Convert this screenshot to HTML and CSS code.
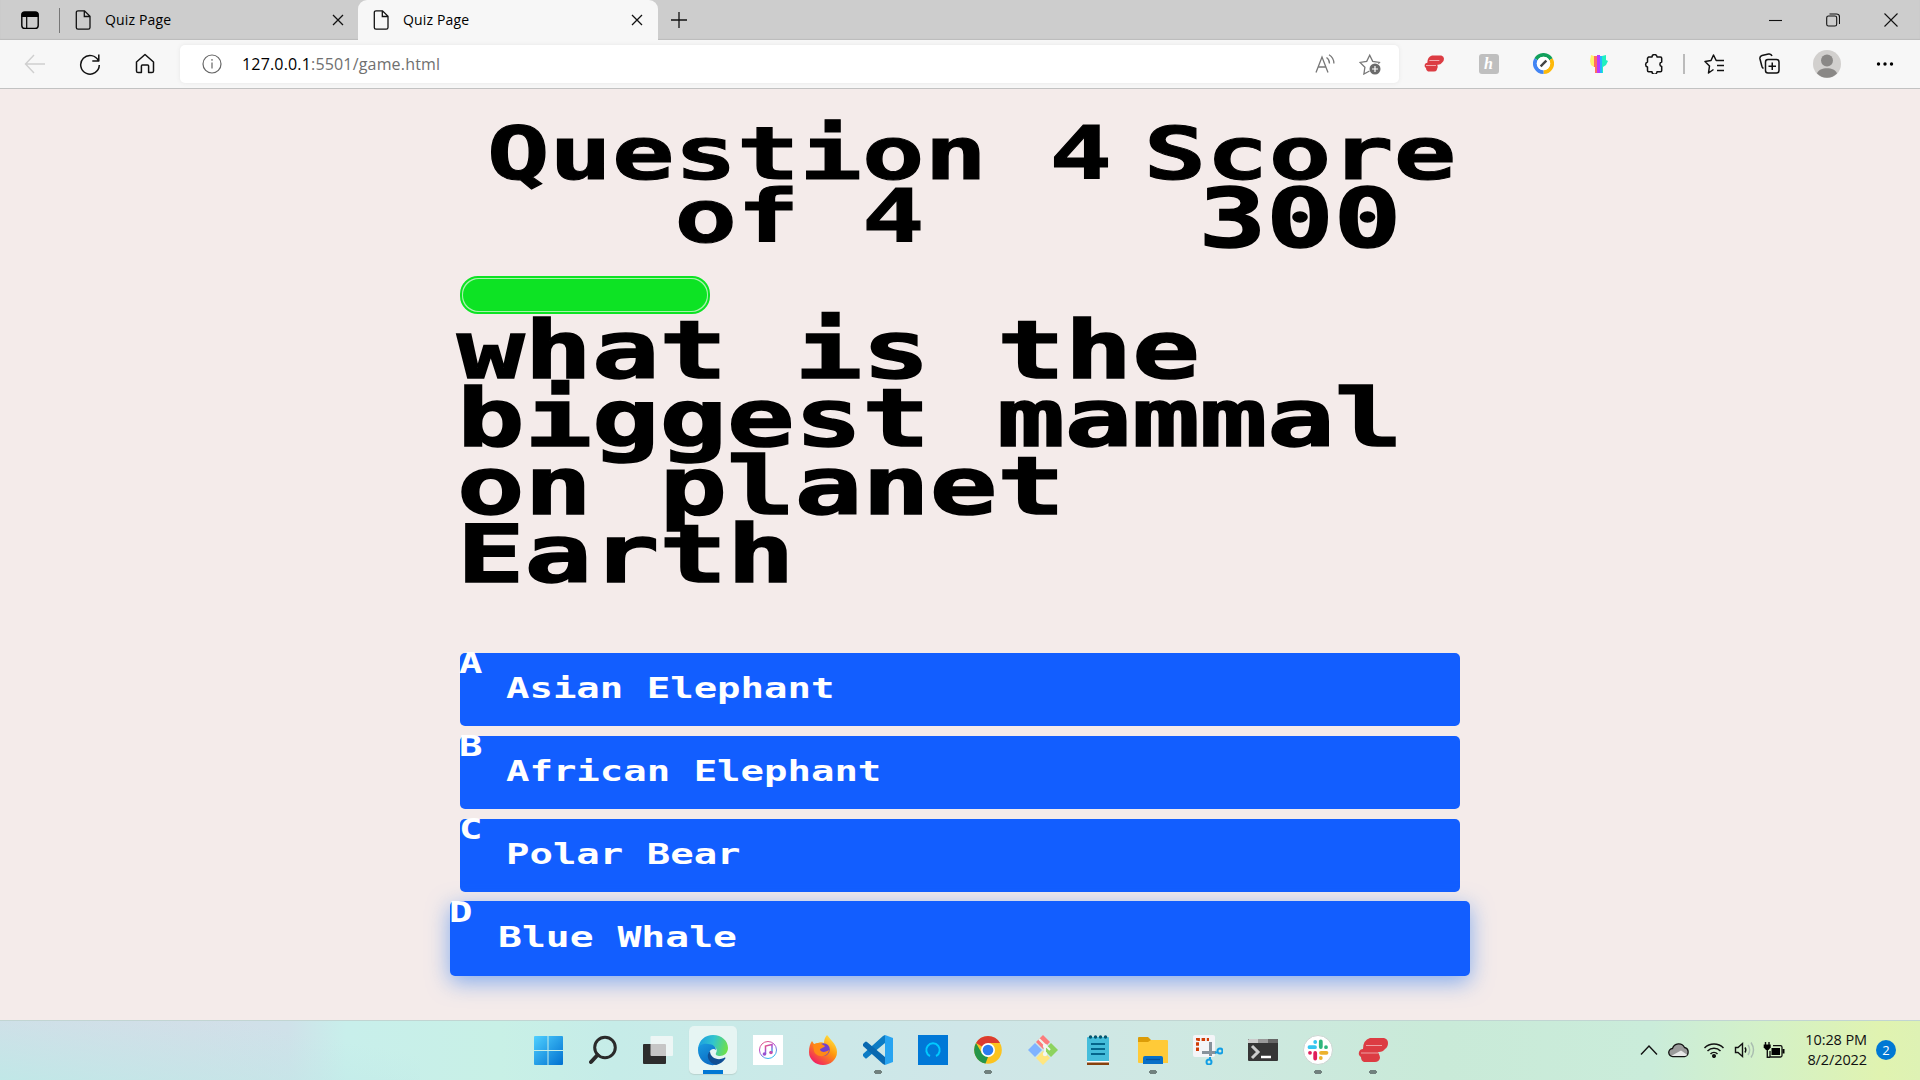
FILE: index.html
```html
<!DOCTYPE html>
<html lang="en">
<head>
<meta charset="utf-8">
<title>Quiz Page</title>
<link rel="stylesheet" href="styles.css">
</head>
<body>
<header class="tabstrip">
  <div class="tab-menu"><svg width="20" height="20" viewBox="0 0 20 20"><rect x="1.8" y="2" width="16.4" height="16.4" rx="3" fill="none" stroke="#000" stroke-width="1.4"/><path d="M1.5 7V5a3 3 0 0 1 3-3h11a3 3 0 0 1 3 3v2z"/><path d="M6.7 7v11" stroke="#000" stroke-width="1.2"/></svg></div>
  <div class="tab">
    <svg width="18" height="20" viewBox="0 0 18 20" class="line"><path d="M4 .8h6.5L16 6.300v11.200a1.700 1.700 0 0 1-1.700 1.700H4a1.700 1.700 0 0 1-1.700-1.700v-15A1.700 1.700 0 0 1 4 .8zM10.300 1v5.500H16"/></svg>
    <span class="tab-title">Quiz Page</span>
    <svg width="12" height="12" viewBox="0 0 12 12" class="line"><path d="M1 1l10 10M11 1L1 11"/></svg>
  </div>
  <div class="tab tab-active">
    <svg width="18" height="20" viewBox="0 0 18 20" class="line"><path d="M4 .8h6.500L16 6.300v11.200a1.700 1.700 0 0 1-1.700 1.700H4a1.700 1.700 0 0 1-1.700-1.700v-15A1.700 1.700 0 0 1 4 .8zM10.300 1v5.500H16"/></svg>
    <span class="tab-title">Quiz Page</span>
    <svg width="12" height="12" viewBox="0 0 12 12" class="line"><path d="M1 1l10 10M11 1L1 11"/></svg>
  </div>
  <div class="new-tab"><svg width="18" height="18" viewBox="0 0 18 18" class="line"><path d="M9 1v16M1 9h16"/></svg></div>
  <div class="window-buttons">
    <span><svg width="14" height="14" viewBox="0 0 14 14" class="hair"><path d="M1 7.500h13"/></svg></span>
    <span><svg width="14" height="14" viewBox="0 0 14 14" class="hair"><rect x=".7" y="3" width="10" height="10" rx="1.800"/><path d="M3.500 1h7a3 3 0 0 1 3 3v7"/></svg></span>
    <span><svg width="14" height="14" viewBox="0 0 14 14" class="hair"><path d="M.5.5l13 13M13.500.5l-13 13"/></svg></span>
  </div>
</header>

<nav class="toolbar">
  <div class="tool"><svg width="22" height="20" viewBox="0 0 22 20" fill="none" stroke="#cfcfcf" stroke-width="1.400"><path d="M21 10H2M10 1L1.500 10l8.500 9"/></svg></div>
  <div class="tool"><svg width="22" height="22" viewBox="0 0 22 22" class="line bold"><path d="M19.500 8A9.300 9.300 0 1 0 20.300 12M19.800 1.500V8h-6.500"/></svg></div>
  <div class="tool"><svg width="20" height="21" viewBox="0 0 20 21" class="line bold"><path d="M1.500 9L10 1.500 18.500 9v9a1.600 1.600 0 0 1-1.600 1.600h-3.300V13a1 1 0 0 0-1-1H7.400a1 1 0 0 0-1 1v6.600H3.100A1.600 1.600 0 0 1 1.500 18z"/></svg></div>
  <div class="address">
    <svg width="20" height="20" viewBox="0 0 20 20" fill="none" stroke="#666" stroke-width="1.200"><circle cx="10" cy="10" r="9"/><path d="M10 8.500v6M10 5v1.700"/></svg>
    <span class="url"><b>127.0.0.1</b>:5501/game.html</span>
    <svg class="read" width="20" height="20" viewBox="0 0 20 20" fill="none" stroke="#777" stroke-width="1.300"><path d="M1 18.500L7 3l6 15.500M3.200 13h7.600M11.500 3.500c2 1.300 3 3.500 3 6M14 .8c3.300 2 4.900 5.200 4.900 8.700"/></svg>
    <svg width="22" height="22" viewBox="0 0 22 22"><path d="M10.500 18l-5.600 3 1-6.700L1 9.400l6.700-1 3-6.200 3 6.200 6.700 1-1 1.200" fill="none" stroke="#777" stroke-width="1.300"/><circle cx="16" cy="16" r="5.500" fill="#6b6b6b"/><path d="M16 13v6M13 16h6" stroke="#fff" stroke-width="1.200"/></svg>
  </div>
  <div class="tool"><svg width="20" height="19" viewBox="0 0 30 26"><path d="M12 1h14q4 1 4 5t-3 6q-2 3-6 3h-1q2 4-1 8-1 2-4 2H6q-3-1-3-5-3-2-2-5 1-3 4-3 0-9 7-11z" fill="#dc3c43"/><path d="M8 8.500h15M3 16h15" stroke="#f1aaae" stroke-width="1.500"/></svg></div>
  <div class="tool"><span class="honey">h</span></div>
  <div class="tool"><svg width="21" height="21" viewBox="0 0 22 22" fill="none" stroke-width="4"><path d="M3.200 6.500a9 9 0 0 1 15.600 0" stroke="#12a05c"/><path d="M18.800 6.500A9 9 0 0 1 11 20" stroke="#fdb90b"/><path d="M11 20A9 9 0 0 1 3.200 6.500" stroke="#4285f4"/><circle cx="11" cy="11" r="7" fill="#fff" stroke="none"/><path d="M8 14l6-6" stroke="#444" stroke-width="2.500"/></svg></div>
  <div class="tool"><svg width="18" height="20" viewBox="0 0 18 20"><path d="M1 1l3 1v11l-3-2-1-4z" fill="#fff26b"/><path d="M4 2h3v17H5v-6H4z" fill="#ff6e62"/><path d="M7 1h3v18H7z" fill="#b83bff"/><path d="M10 2h2v17h-2z" fill="#25b6ff"/><path d="M12 2l4-1v5l2 1-2 4-3 2v6h-1z" fill="#20f0c0"/></svg></div>
  <div class="tool"><svg width="20" height="20" viewBox="0 0 20 20" class="line bold"><path d="M4.500 3H8a2.500 2.500 0 0 1 5 0h3.500a1.200 1.200 0 0 1 1.200 1.200V8a2.300 2.300 0 0 0 0 4.500v4a1.200 1.200 0 0 1-1.200 1.200H13a2.500 2.500 0 0 1-5 0H4.700a1.200 1.200 0 0 1-1.200-1.200V13a2.600 2.600 0 0 1 0-5V4.200z"/></svg></div>
  <div class="divider"></div>
  <div class="tool"><svg width="21" height="20" viewBox="0 0 21 20" class="line bold"><path d="M9.500 15.500L4.500 19l1-7L1 7.500l6-1L9.500 1l2.700 5.500H20M13 11.500h7M13 16.500h7"/></svg></div>
  <div class="tool"><svg width="21" height="21" viewBox="0 0 21 21" class="line bold"><rect x="6.500" y="6.500" width="13.500" height="13.500" rx="2.500"/><path d="M13.250 9.500v7.500M9.500 13.250H17M4.500 15.500A3 3 0 0 1 2.800 13L1 6a3 3 0 0 1 2-3.500L9.500 1a3 3 0 0 1 3.500 2"/></svg></div>
  <div class="tool profile"><svg width="28" height="28" viewBox="0 0 28 28"><circle cx="14" cy="14" r="14" fill="#d2d0ce"/><circle cx="14" cy="10.500" r="6" fill="#8a8886"/><path d="M4 23.500C6 16.500 22 16.500 24 23.500A14 14 0 0 1 4 23.500z" fill="#8a8886"/></svg></div>
  <div class="tool"><svg width="18" height="4" viewBox="0 0 18 4"><circle cx="2.500" cy="2" r="1.700"/><circle cx="9" cy="2" r="1.700"/><circle cx="15.500" cy="2" r="1.700"/></svg></div>
</nav>

<main class="game">
  <div class="hud">
    <div class="hud-question"><p class="hud-line">Question 4</p><p class="hud-line">of 4</p></div>
    <div class="hud-score"><p class="hud-line">Score</p><p class="hud-value">300</p></div>
  </div>
  <div class="progress"><div class="progress-fill"></div></div>
  <h1 class="question"><span>what is the</span><span>biggest mammal</span><span>on planet</span><span>Earth</span></h1>
  <div class="choices">
    <div class="choice"><span class="prefix">A</span><span class="answer">Asian Elephant</span></div>
    <div class="choice"><span class="prefix">B</span><span class="answer">African Elephant</span></div>
    <div class="choice"><span class="prefix">C</span><span class="answer">Polar Bear</span></div>
    <div class="choice choice-hover"><span class="prefix">D</span><span class="answer">Blue Whale</span></div>
  </div>
</main>

<footer class="taskbar">
  <div class="apps">
    <div class="app"><svg width="30" height="30" viewBox="0 0 30 30"><defs><linearGradient id="win" x1="0" y1="0" x2="1" y2="1"><stop offset="0" stop-color="#4fd0ff"/><stop offset="1" stop-color="#0070d0"/></linearGradient></defs><path d="M2 1h12.500v14H1V2a1 1 0 0 1 1-1zM15.500 1H29a1 1 0 0 1 1 1v13H15.500zM1 16h13.500v14H2a1 1 0 0 1-1-1zM15.500 16H30v13a1 1 0 0 1-1 1H15.500z" fill="url(#win)"/></svg></div>
    <div class="app"><svg width="28" height="30" viewBox="0 0 28 30" fill="none" stroke="#2a2a2a" stroke-width="3"><circle cx="16" cy="12.500" r="10.300"/><path d="M8.500 20L2 27" stroke-width="4" stroke-linecap="round"/></svg></div>
    <div class="app"><svg width="30" height="30" viewBox="0 0 30 30"><rect y="9" width="23" height="20" rx="1" fill="#2d2d2d"/><rect x="7.500" y="1" width="22.500" height="20" rx="1" fill="#fafafa" opacity=".75"/></svg></div>
    <div class="app app-active"><svg width="32" height="32" viewBox="0 0 32 32"><defs><linearGradient id="edgeA" x1="0" y1=".3" x2="1" y2=".5"><stop offset="0" stop-color="#1b9de2"/><stop offset=".5" stop-color="#31c5cd"/><stop offset="1" stop-color="#6fe04a"/></linearGradient><linearGradient id="edgeB" x1="0" y1="0" x2=".5" y2="1"><stop offset="0" stop-color="#1a9be0"/><stop offset="1" stop-color="#0b6cc4"/></linearGradient></defs><path d="M1 15C2 6 8 1 16 1c9 0 15 6 15 13 0 5-4 8-8 8-3 0-5-1-4-3 2-3 0-7-5-7C8 11 3 12 1 15z" fill="url(#edgeA)"/><path d="M1 16C1 11 6 9 11 10c5 0 8 3 8 6-2-2-6-1-7 3-1 5 4 9 9 11-9 4-20-3-20-14z" fill="url(#edgeB)"/><path d="M13 17c-5 5-1 12 6 14 4-1 7-3 9-6 1-1 0-2-1-1-6 3-14 0-14-7z" fill="#104f94"/></svg></div>
    <div class="app"><svg width="30" height="30" viewBox="0 0 30 30"><defs><linearGradient id="tune" x1="0" y1="0" x2=".5" y2="1"><stop offset="0" stop-color="#f2566c"/><stop offset=".5" stop-color="#b04bd0"/><stop offset="1" stop-color="#35b8ee"/></linearGradient></defs><path fill="#fff" d="M0 0h30v30H0z"/><g fill="none" stroke="url(#tune)"><circle cx="15" cy="15" r="8.500" stroke-width="1"/><path d="M12.500 19v-8l6.500-1.500V17" stroke-width="1.500"/></g><circle cx="11.500" cy="19" r="1.800" fill="#9a50d0"/><circle cx="18" cy="17.500" r="1.800" fill="#c050b0"/></svg></div>
    <div class="app"><svg width="30" height="30" viewBox="0 0 30 30"><defs><linearGradient id="fox" x1=".9" y1="0" x2=".2" y2="1"><stop offset="0" stop-color="#fff04a"/><stop offset=".45" stop-color="#ff980e"/><stop offset="1" stop-color="#f0136b"/></linearGradient></defs><path d="M19 0c2 2 3 4 5 6 3 3 5 7 5 11a14 13 0 0 1-28 0C1 12 2 9 4 6l2 3 4-1c2-1 4-1 6 0 0-3 1-6 3-8z" fill="url(#fox)"/><circle cx="15.500" cy="14.500" r="6.300" fill="#7040d0"/><path d="M5 10c4-3 8-2 12 1-1 2-5 2-5 4 2 3 6 2 9 0-1 8-13 8-15 1z" fill="#ff8a16"/></svg></div>
    <div class="app app-open"><svg width="30" height="30" viewBox="0 0 30 30"><path d="M22 0v8L4 23q-1 1-2 0l-2-2v-2L20 1z" fill="#0d7cc4"/><path d="M22 30v-8L4 7Q3 6 2 7L0 9v2l20 18z" fill="#0868b0"/><path d="M22 0l8 3v24l-8 3z" fill="#27a4f1"/></svg></div>
    <div class="app"><svg width="30" height="30" viewBox="0 0 30 30"><path fill="#0078d7" d="M0 0h30v30H0z"/><path d="M12 21a6.700 6.700 0 1 1 6 0" fill="none" stroke="#00caff" stroke-width="2"/></svg></div>
    <div class="app app-open"><svg width="28" height="28" viewBox="0 0 28 28"><circle cx="14" cy="14" r="13.800" fill="#fcc31f"/><path d="M14 14L2 7.100A13.800 13.800 0 0 1 26 7.100H14z" fill="#dc3b30"/><path d="M2 7.100l6 10.400 6 3.500-2.500 6.600A13.800 13.800 0 0 1 2 7.100z" fill="#25964a"/><circle cx="14" cy="14" r="7" fill="#fff"/><circle cx="14" cy="14" r="5.300" fill="#2c7cf0"/></svg></div>
    <div class="app"><svg width="30" height="30" viewBox="0 0 30 30"><path d="M15 0l7 7-7 7-7-7z" fill="#fc7c7c"/><path d="M7 8l7 7-7 7-7-7z" fill="#80b3ff"/><path d="M23 8l7 7-7 7-7-7z" fill="#8dd35f"/><path d="M15 16l7 7-7 7-7-7z" fill="#ffe680"/><path d="M11 4l6 6v10M17 10l5 5" fill="none" stroke="#eff7ed" stroke-width="2"/><circle cx="17" cy="11" r="2.200" fill="#f2f7f2"/><circle cx="17" cy="19" r="2.200" fill="#f2f7f2"/></svg></div>
    <div class="app"><svg width="22" height="30" viewBox="0 0 22 30"><rect y="2" width="22" height="25" rx="1" fill="#45bddb"/><path d="M0 27h22v3H0z" fill="#87410d"/><path d="M0 26h22v1.500H0z" fill="#fff"/><path d="M4 9h14M4 14h14M4 19h14" stroke="#05668c" stroke-width="1.800"/><g fill="#07566e"><circle cx="3.500" cy="2" r="1.700"/><circle cx="8.500" cy="2" r="1.700"/><circle cx="13.500" cy="2" r="1.700"/><circle cx="18.500" cy="2" r="1.700"/></g></svg></div>
    <div class="app app-open"><svg width="30" height="28" viewBox="0 0 30 28"><path d="M0 2q0-1 1-1h9l3 3v5H0z" fill="#dc9c08"/><path d="M0 6h10l3-2h16q1 0 1 1v22H1q-1 0-1-1z" fill="#ffca38"/><path d="M5 28v-6q0-2 2-2h16q2 0 2 2v6z" fill="#0870c8"/><path d="M8 23.500h14" stroke="#07519c" stroke-width="1.300"/></svg></div>
    <div class="app"><svg width="30" height="30" viewBox="0 0 30 30"><rect width="22" height="22" rx="2" fill="#f4f5f8"/><path d="M4.500 16V4.500H16" fill="none" stroke="#d03c05" stroke-width="3" stroke-dasharray="3.500 1.700"/><path d="M17.500 7v14M9 17.500h14" stroke="#87929b" stroke-width="3"/><g fill="none" stroke="#129ee4" stroke-width="2"><circle cx="27" cy="16" r="2.500"/><circle cx="16" cy="27" r="2.500"/><path d="M24 17.500h-2M17 24v-2"/></g></svg></div>
    <div class="app"><svg width="30" height="22" viewBox="0 0 30 22"><rect width="30" height="22" rx="1" fill="#363636"/><path d="M1 0h9v4H0V1z" fill="#ccc"/><path d="M10 0h10v4H10z" fill="#999"/><path d="M20 0h9l1 1v3H20z" fill="#666"/><path d="M4 7l6 6-6 6" fill="none" stroke="#ccc" stroke-width="3"/><path d="M13 18h10" stroke="#fff" stroke-width="2.500"/></svg></div>
    <div class="app app-open"><svg width="30" height="30" viewBox="0 0 30 30"><circle cx="15" cy="15" r="14.500" fill="#fff" stroke="#ccd5d2"/><g fill="none" stroke-width="3.800" stroke-linecap="round"><path d="M6.500 12.200H12M12.200 7v0" stroke="#36c5f0"/><path d="M17.800 6.500V12M23 12.200v0" stroke="#2eb67d"/><path d="M18 17.800h5.500M17.800 23v0" stroke="#ecb22e"/><path d="M12.200 18v5.500M7 17.800v0" stroke="#e01e5a"/></g></svg></div>
    <div class="app app-open"><svg width="30" height="26" viewBox="0 0 30 26"><path d="M12 1h14q4 1 4 5t-3 6q-2 3-6 3h-1q2 4 2 6-1 4-5 4H6q-3-1-3-5-3-2-2-5 1-3 4-3 0-9 7-11z" fill="#dc3c43"/><path d="M8 8.500h16M3 16h17" stroke="#eda0a3" stroke-width="1.200"/></svg></div>
  </div>
  <div class="tray">
    <svg width="18" height="12" viewBox="0 0 18 12" fill="none" stroke="#111" stroke-width="1.400"><path d="M1 10.500L9 2l8 8.500"/></svg>
    <svg class="cloud" width="22" height="16" viewBox="0 0 22 16"><path d="M5 14.500a4 4 0 0 1-.5-8A6.500 6.500 0 0 1 16.500 5.500 4.600 4.600 0 0 1 16.500 14.500z" fill="#9b9b9b" stroke="#111" stroke-width="1.300"/><path d="M3.500 13.700L13 8.500l6.500 4.500-2.500 1H5z" fill="#e8e8e8"/></svg>
    <svg class="wifi" width="22" height="16" viewBox="0 0 22 16" fill="none" stroke="#111" stroke-width="1.500"><path d="M1.500 6a13.500 13.500 0 0 1 19 0M4.500 9a9.200 9.200 0 0 1 13 0M7.500 12a5 5 0 0 1 7 0"/><circle cx="11" cy="14" r="1.300" fill="#111"/></svg>
    <svg class="sound" width="22" height="18" viewBox="0 0 22 18" fill="none" stroke="#111" stroke-width="1.400"><path d="M1.500 6.500H4l4.500-4v13l-4.500-4H1.500zM11 6.500q1.700 2.500 0 5"/><path d="M14 4q3.300 5 0 10M17 1.500q5 7.500 0 15" stroke="#a9bcb0"/></svg>
    <svg class="battery" width="22" height="18" viewBox="0 0 22 18"><path d="M2.500 1v4M6 1v4M4.300 7v9.300H7" fill="none" stroke="#111" stroke-width="1.400"/><path d="M.7 3.500h7v3L5.500 9H3L.7 6.500z"/><path d="M10 4.700h7.500a1.500 1.500 0 0 1 1.500 1.500v8.300a1.500 1.500 0 0 1-1.500 1.500H7V10" fill="none" stroke="#111" stroke-width="1.300"/><path d="M8.500 7h8.500v7H8.500zM19.500 8h2v4.500h-2z"/></svg>
    <div class="clock"><span>10:28 PM</span><span>8/2/2022</span></div>
    <span class="badge">2</span>
  </div>
</footer>
</body>
</html>
```

FILE: styles.css
```css
* { box-sizing: border-box; }

body {
  margin: 0;
  width: 1920px;
  height: 1080px;
  overflow: hidden;
  display: flex;
  flex-direction: column;
  background: #f4ebea;
  font-family: "Open Sans", "Noto Sans", sans-serif;
  color: #000;
}

p, h1 { margin: 0; font-weight: bold; }
svg { display: block; flex: none; }
.line { fill: none; stroke: #111; stroke-width: 1.3; }
.bold { stroke-width: 1.5; stroke-linejoin: round; }
.hair { fill: none; stroke: #111; stroke-width: 1.1; }

/* Browser tabs */
.tabstrip {
  height: 40px;
  flex: none;
  display: flex;
  background: #cdcdcd;
  box-shadow: inset 0 -1px 1px #bcbcbc;
}
.tab-menu {
  width: 60px;
  display: flex;
  align-items: center;
  padding-left: 20px;
  background: linear-gradient(#777, #777) right 8px / 1px 25px no-repeat;
}
.tab {
  width: 298px;
  display: flex;
  align-items: center;
  padding: 0 14px;
}
.tab-active {
  width: 300px;
  padding: 0 15px 0 14px;
  background: #f7f7f7;
  border-radius: 9px 9px 0 0;
}
.tab-title {
  flex: 1;
  margin-left: 13px;
  font-size: 14px;
  letter-spacing: 0.15px;
  line-height: 38px;
}
.new-tab { display: flex; align-items: center; padding-left: 12px; }
.window-buttons { margin-left: auto; display: flex; }
.window-buttons span {
  width: 58px;
  display: flex;
  align-items: center;
  justify-content: center;
}

/* Browser toolbar */
.toolbar {
  height: 49px;
  flex: none;
  display: flex;
  align-items: center;
  padding: 0 8px 1px 7px;
  background: #f7f7f7;
  border-bottom: 1px solid #c2c2c2;
}
.tool {
  width: 55px;
  flex: none;
  display: flex;
  align-items: center;
  justify-content: center;
}
.profile { width: 60px; }
.divider { width: 2px; height: 20px; margin: 0 2px; background: #bbb; }
.address {
  width: 1219px;
  height: 38px;
  flex: none;
  display: flex;
  align-items: center;
  margin: 0 7px 0 8px;
  padding: 0 18px 0 22px;
  background: #fff;
  border-radius: 5px;
  box-shadow: 0 0 4px #e6e6e6;
}
.url {
  flex: 1;
  margin-left: 20px;
  font-size: 16px;
  letter-spacing: 0.17px;
  color: #707070;
}
.url b { font-weight: normal; color: #000; }
.read { margin-right: 24px; }
.honey {
  width: 20px;
  height: 20px;
  border-radius: 3px;
  background: #bfbfbf;
  color: #fff;
  font: italic bold 16px/19px "Liberation Serif", serif;
  text-align: center;
}

/* Quiz */
.game {
  width: 1000px;
  height: 931px;
  flex: none;
  margin: 0 auto;
  padding-top: 33px;
  font-family: "DejaVu Sans Mono", monospace;
  font-weight: bold;
}
.hud {
  height: 154px;
  display: flex;
  justify-content: flex-end;
  gap: 32px;
  margin: 0 4px 0 -4px;
  text-align: center;
  white-space: nowrap;
}
.hud-question { width: 625px; }
.hud-score { width: 312px; }
.hud-line {
  font-size: 73px;
  line-height: 63px;
  transform: scaleX(1.422);
  -webkit-text-stroke: 1px #000;
}
.hud-value {
  font-size: 82px;
  line-height: 68px;
  transform: scaleX(1.367);
  -webkit-text-stroke: 1.5px #000;
}
.progress {
  width: 250px;
  height: 38px;
  padding: 1px;
  border: 2px solid #0de324;
  border-radius: 18px;
  background: #a9f1ad;
}
.progress-fill { height: 100%; border-radius: 16px; background: #0de324; }
.question {
  margin: 3px 0 64px -3px;
  font-size: 80px;
  line-height: 68px;
  white-space: nowrap;
  transform: scaleX(1.402);
  transform-origin: left;
  -webkit-text-stroke: 1.5px #000;
}
.question span { display: block; }
.choices { display: flex; flex-direction: column; gap: 10px; }
.choice {
  height: 73px;
  display: flex;
  align-items: flex-start;
  border-radius: 5px;
  background: #125eff;
  color: #fff;
  font-size: 28.8px;
  white-space: nowrap;
}
.choice-hover {
  height: 75px;
  margin: -1px -10px 0;
  box-shadow: 0 6px 22px rgba(38, 118, 240, 0.55);
}
.prefix, .answer { transform: scaleX(1.353); transform-origin: left; }
.prefix { width: 47px; line-height: 20px; margin-left: -1px; }
.answer { line-height: 70px; }
.choice-hover .prefix { line-height: 22px; width: 49px; }
.choice-hover .answer { line-height: 72px; transform: scaleX(1.378); }

/* Taskbar */
.taskbar {
  height: 60px;
  flex: none;
  display: flex;
  align-items: center;
  padding-bottom: 1px;
  border-top: 1px solid #c1d5d2;
  background:
    linear-gradient(10deg, rgba(190, 233, 231, 0.9) 0, rgba(190, 233, 231, 0) 75%) 0 0 / 420px 100% no-repeat,
    linear-gradient(90deg, #d8dbe8 0, #d3dee8 10%, #cfe1e9 15%, #c8efeb 18%, #c8f0e6 26%, #c6ece8 32%, #cfe6e8 50%, #cfe8e3 60%, #c9ead8 75%, #caecda 86%, #d4f1c7 92%, #e0f3b0 98%, #def2b4 100%);
}
.apps { display: flex; margin-left: 520px; }
.app {
  width: 55px;
  height: 48px;
  display: flex;
  align-items: center;
  justify-content: center;
}
.app-active {
  width: 48px;
  margin: 0 3px 0 4px;
  border-radius: 5px;
  background: linear-gradient(#0078d4, #0078d4) center bottom / 20px 4px no-repeat, #e6f5f3;
  box-shadow: 0 1px 1px #b9d3cf;
}
.app-open { background: radial-gradient(ellipse 4px 3px, #71817e 90%, transparent) center bottom / 8px 4px no-repeat; }
.tray {
  display: flex;
  align-items: center;
  margin-left: 240px;
}
.cloud { margin-left: 10px; }
.wifi { margin-left: 13px; }
.sound { margin-left: 9px; }
.battery { margin-left: 7px; }
.clock {
  width: 82px;
  display: flex;
  flex-direction: column;
  text-align: right;
  font-size: 14.5px;
  line-height: 20px;
  letter-spacing: -0.1px;
  white-space: nowrap;
  color: #111;
}
.badge {
  width: 20px;
  height: 20px;
  margin-left: 9px;
  border-radius: 50%;
  background: #0078d4;
  color: #fff;
  font-size: 13px;
  line-height: 20px;
  text-align: center;
}
```
